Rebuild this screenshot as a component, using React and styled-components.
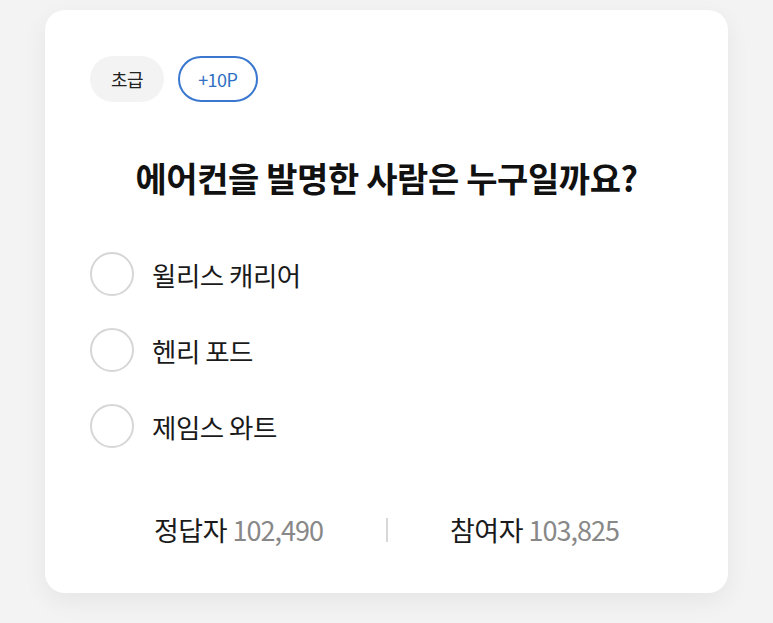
import React from "react";
import styled, { createGlobalStyle } from "styled-components";

const GlobalStyle = createGlobalStyle`
  html, body {
    margin: 0;
    padding: 0;
    background: #f3f3f3;
    font-family: "Noto Sans CJK KR", "Noto Sans", sans-serif;
  }
`;

const Page = styled.div`
  padding: 10px 45px 30px 45px;
`;

const Card = styled.div`
  box-sizing: border-box;
  width: 683px;
  height: 583px;
  background: #fff;
  border-radius: 20px;
  box-shadow: 0 8px 24px rgba(0, 0, 0, 0.06);
  padding: 46px 45px 0 45px;
  display: flex;
  flex-direction: column;
`;

const Badges = styled.div`
  display: flex;
  gap: 14px;
`;

const Badge = styled.span`
  box-sizing: border-box;
  height: 46px;
  padding: 0 ${(p) => (p.$outline ? "18px" : "21px")};
  border-radius: 23px;
  display: flex;
  align-items: center;
  font-size: 18px;
  background: ${(p) => (p.$outline ? "#fff" : "#f3f3f3")};
  color: ${(p) => (p.$outline ? "#2f6fc4" : "#222")};
  border: ${(p) => (p.$outline ? "2px solid #3a78cf" : "none")};
  letter-spacing: -0.5px;
`;

const Title = styled.h1`
  margin: 56px 0 0 0;
  font-size: 34px;
  font-weight: 600;
  text-align: center;
  color: #111;
  letter-spacing: -0.4px;
  line-height: 40px;
`;

const Options = styled.div`
  display: flex;
  flex-direction: column;
  gap: 32px;
  margin-top: 54px;
`;

const Option = styled.label`
  display: flex;
  align-items: center;
  gap: 18px;
  font-size: 26.5px;
  color: #1a1a1a;
  letter-spacing: -0.5px;
`;

const Radio = styled.span`
  box-sizing: border-box;
  width: 44px;
  height: 44px;
  border-radius: 50%;
  border: 2px solid #d6d6d6;
  flex-shrink: 0;
`;

const Stats = styled.div`
  display: flex;
  align-items: center;
  justify-content: center;
  margin-top: 62px;
  line-height: 40px;
`;

const Stat = styled.div`
  width: 294px;
  text-align: center;
  font-size: 27px;
  color: #1a1a1a;
  letter-spacing: -0.5px;
`;

const Num = styled.span`
  color: #888;
  letter-spacing: -1px;
`;

const Divider = styled.span`
  width: 2px;
  height: 24px;
  background: #d8d8d8;
`;

export default function App() {
  const options = ["윌리스 캐리어", "헨리 포드", "제임스 와트"];
  return (
    <Page>
      <GlobalStyle />
      <Card>
        <Badges>
          <Badge>초급</Badge>
          <Badge $outline>+10P</Badge>
        </Badges>
        <Title>에어컨을 발명한 사람은 누구일까요?</Title>
        <Options>
          {options.map((o) => (
            <Option key={o}>
              <Radio />
              {o}
            </Option>
          ))}
        </Options>
        <Stats>
          <Stat>
            정답자 <Num>102,490</Num>
          </Stat>
          <Divider />
          <Stat>
            참여자 <Num>103,825</Num>
          </Stat>
        </Stats>
      </Card>
    </Page>
  );
}
